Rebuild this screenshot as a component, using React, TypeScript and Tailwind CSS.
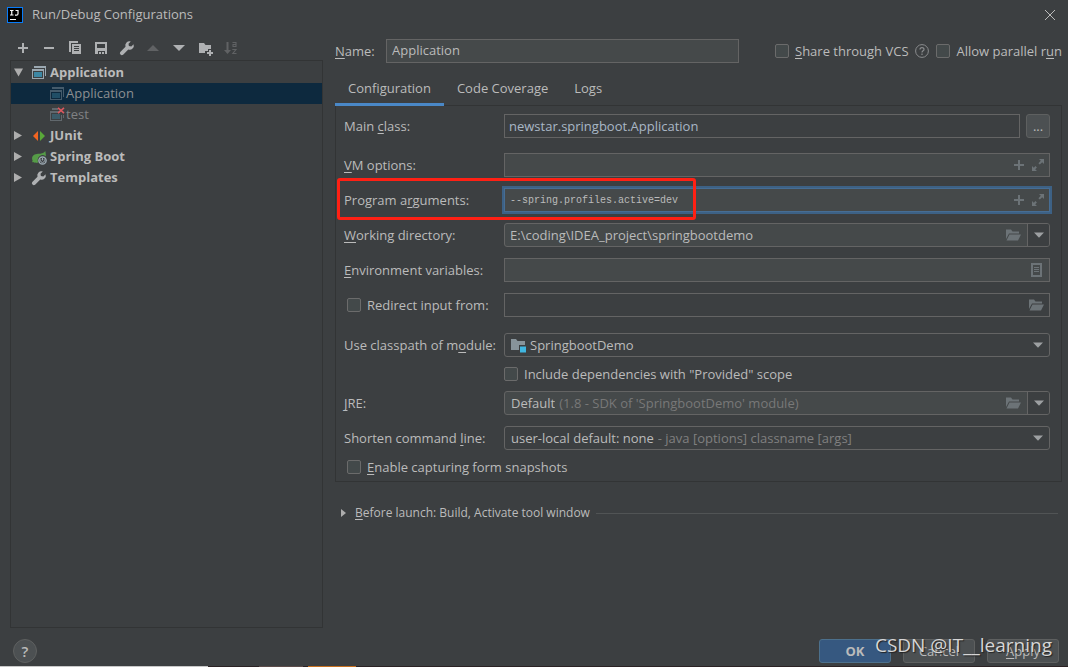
import React, { useState } from "react";

type IconProps = { className?: string };

function Svg({ children, className = "size-4" }: { children: React.ReactNode; className?: string }) {
  return (
    <svg viewBox="0 0 16 16" fill="currentColor" aria-hidden="true" className={`shrink-0 ${className}`}>
      {children}
    </svg>
  );
}

const PlusIcon = (p: IconProps) => (
  <Svg {...p}><path d="M7 3h2v4h4v2H9v4H7V9H3V7h4z" /></Svg>
);
const MinusIcon = () => <Svg><path d="M3 7h10v2H3z" /></Svg>;
const CopyIcon = () => (
  <Svg>
    <path d="M2 1h9v2H4v9H2z" />
    <path fillRule="evenodd" d="M5 4h9v10H5zM7 6v1h5V6zm0 2v1h5V8zm0 2v1h5v-1z" />
  </Svg>
);
const SaveIcon = () => (
  <Svg><path fillRule="evenodd" d="M2 2h12v12h-2v-3H5v3H2zm2 2v4h8V4zM6 12h2v2H6zm3 0h2v2H9z" /></Svg>
);
const WrenchIcon = (p: IconProps) => (
  <Svg {...p}>
    <path d="M14.600 4.200 12.300 6.500 9.900 6.100 9.500 3.700l2.300-2.300A4.200 4.200 0 0 0 6.500 6.700L1.300 11.900a2 2 0 0 0 2.800 2.800l5.200-5.200a4.200 4.200 0 0 0 5.300-5.300z" />
  </Svg>
);
const UpIcon = () => <Svg><path d="M2 11 8 5l6 6z" /></Svg>;
const DownIcon = () => <Svg><path d="M2 5h12l-6 6z" /></Svg>;
const FolderPlusIcon = () => (
  <Svg className="size-4 overflow-visible">
    <path d="M2 3h5l1.500 2H14v4h-3v2H8v2H2z" />
    <path d="M12 10h2v2h2v2h-2v2h-2v-2h-2v-2h2z" />
  </Svg>
);
const SortIcon = () => (
  <Svg>
    <path d="M3.500 2h2v8H8l-3.500 4L1 10h2.500z" />
    <path
      fill="none"
      stroke="currentColor"
      strokeWidth="1.100"
      d="M9.500 2.500h3.500v4.500M13 4.500h-3v2h3M9.300 9.500h3.700L9.800 13.500h3.700"
    />
  </Svg>
);
const AppIcon = (p: IconProps) => (
  <Svg {...p}>
    <path fill="#9aa7b0" d="M3 1h12v10h-1V3H3z" />
    <path fill="#9aa7b0" fillRule="evenodd" d="M1 4h12v10H1zm1 2v7h10V6z" />
    <path fill="#3d87a3" d="M3 7h8v5H3z" />
  </Svg>
);
const BrokenAppIcon = () => (
  <Svg>
    <g opacity=".4">
      <path fill="#9aa7b0" d="M3 1h6v2H3zM14 8h1v3h-1z" />
      <path fill="#9aa7b0" fillRule="evenodd" d="M1 4h9l1 2H2v7h10V8h1v6H1z" />
      <path fill="#3d87a3" d="M3 7h8v5H3z" />
    </g>
    <path fill="none" stroke="#db5860" strokeWidth="1.600" d="M9 .800l6 5.400M15 .800l-6 5.400" />
  </Svg>
);
const JUnitIcon = () => (
  <Svg>
    <path fill="#f26522" d="M7 3v10L2 8z" />
    <path fill="#59a839" d="M9 3v10l5-5z" />
  </Svg>
);
const SpringIcon = () => (
  <Svg>
    <path fill="#559b47" d="M14.300 2c.5 2.500.7 4 .4 5.400A4.800 4.800 0 0 0 7 12.600L6.500 14c-2 0-3.300-.3-4.300-.9L1 13.300l.6-1.500C-.2 7.500 3 5 7 4.800 10 4.700 12.800 4.500 14.300 2z" />
    <circle cx="11.500" cy="11.500" r="3.600" fill="#3c3f41" stroke="#9aa7b0" strokeWidth="1.500" />
    <path fill="none" stroke="#9aa7b0" strokeWidth="1" d="M11.500 9v2.500M10 10.200a2 2 0 1 0 3 0" />
  </Svg>
);
const ExpandIcon = () => (
  <Svg>
    <path d="M9 2h5v5l-1.800-1.800-2.400 2.400-1.400-1.400 2.400-2.400zM2 14V9l1.800 1.800 1.700-1.700 1.400 1.400-1.700 1.700L7 14z" />
  </Svg>
);
const OpenFolderIcon = () => (
  <Svg>
    <path d="M1 2.500h5l1.500 2H14V6.500H4L1 12z" />
    <path d="M4.500 7.500H16L13 13.500H1.500z" />
  </Svg>
);
const ListIcon = () => (
  <Svg>
    <path fillRule="evenodd" d="M3 1h11v14H3zm2 2v10h7V3z" />
    <path d="M6 5h5v1H6zm0 2h5v1H6zm0 2h5v1H6z" />
  </Svg>
);
const ModuleIcon = () => (
  <Svg>
    <path fill="#87939a" d="M1 2h5l1.500 2H15v4H9v5H1z" />
    <path fill="#40b6e0" d="M10 9.500h6v6h-6z" />
  </Svg>
);
const Caret = () => (
  <svg viewBox="0 0 10 6" aria-hidden="true" className="h-1.5 w-2.5 shrink-0 fill-[#9da0a2]">
    <path d="M0 .500h10L5 5.800z" />
  </svg>
);

const U = ({ children }: { children: React.ReactNode }) => (
  <span className="underline underline-offset-2">{children}</span>
);

function Check({ id, children }: { id: string; children: React.ReactNode }) {
  return (
    <span className="flex items-center gap-[6px] whitespace-nowrap">
      <input
        id={id}
        type="checkbox"
        className="size-3.5 shrink-0 appearance-none rounded-[2px] border border-[#6b6b6b] bg-[#43494a] checked:bg-[#4a88c7]"
      />
      <label htmlFor={id}>{children}</label>
    </span>
  );
}

function Row({ id, label, children, className = "" }: {
  id: string;
  label: React.ReactNode;
  children: React.ReactNode;
  className?: string;
}) {
  return (
    <div className={`relative flex h-6 items-center ${className}`}>
      <label htmlFor={id} className="w-40 shrink-0 whitespace-nowrap">{label}</label>
      {children}
    </div>
  );
}

const box = "flex h-6 min-w-0 flex-1 items-center border border-[#646464]";
const field = "h-full min-w-0 flex-1 bg-transparent px-1 outline-none";
const ghost = "flex size-[19px] shrink-0 items-center justify-center text-[#6c7377]";

function TextActions({ name }: { name: string }) {
  return (
    <>
      <button aria-label={`Insert macro in ${name}`} className={ghost}><PlusIcon /></button>
      <button aria-label={`Expand ${name}`} className={`${ghost} mr-0.5`}><ExpandIcon /></button>
    </>
  );
}

function DropButton({ label }: { label: string }) {
  return (
    <button aria-label={label} className="flex h-full w-[22px] shrink-0 items-center justify-center rounded-r-[2px] border-l border-[#646464] bg-[#3c3f41]">
      <Caret />
    </button>
  );
}

const tools = [
  { name: "Add", icon: <PlusIcon /> },
  { name: "Remove", icon: <MinusIcon /> },
  { name: "Copy", icon: <CopyIcon /> },
  { name: "Save", icon: <SaveIcon /> },
  { name: "Edit templates", icon: <WrenchIcon /> },
  { name: "Move up", icon: <UpIcon />, off: true },
  { name: "Move down", icon: <DownIcon /> },
  { name: "New folder", icon: <FolderPlusIcon /> },
  { name: "Sort", icon: <SortIcon />, off: true },
];

function TreeGroup({ label, icon, open }: { label: string; icon: React.ReactNode; open?: boolean }) {
  return (
    <button className="flex h-[21px] w-full items-center pl-[3px] text-left font-bold">
      <svg viewBox="0 0 9 9" aria-hidden="true" className="mr-2 size-[9px] shrink-0 fill-[#adadad]">
        <path d={open ? "M0 .500h9L4.500 8.500z" : "M0 0l8 4.500L0 9z"} />
      </svg>
      {icon}
      <span className="ml-[3px] pb-0.5">{label}</span>
    </button>
  );
}

function Sidebar() {
  return (
    <aside className="flex w-[313px] shrink-0 flex-col">
      <div className="flex h-[31px] gap-2.5 pt-[11px] pl-[5px]">
        {tools.map((t) => (
          <button key={t.name} aria-label={t.name} disabled={t.off} className={`size-4 ${t.off ? "text-[#606264]" : "text-[#afb1b3]"}`}>
            {t.icon}
          </button>
        ))}
      </div>
      <nav aria-label="Configurations" className="flex-1 border border-[#323435] pt-px">
        <TreeGroup label="Application" icon={<AppIcon />} open />
        <button className="flex h-[21px] w-full items-center bg-[#0d293e] pl-[38px] text-left text-[#8c8f91]">
          <AppIcon className="size-4 opacity-40" />
          <span className="ml-px pb-0.5">Application</span>
        </button>
        <button className="flex h-[21px] w-full items-center pl-[38px] text-left text-[#808284]">
          <BrokenAppIcon />
          <span className="ml-px pb-0.5">test</span>
        </button>
        <TreeGroup label="JUnit" icon={<JUnitIcon />} />
        <TreeGroup label="Spring Boot" icon={<SpringIcon />} />
        <TreeGroup label="Templates" icon={<WrenchIcon className="size-4 text-[#afb1b3]" />} />
      </nav>
    </aside>
  );
}

function ConfigurationForm() {
  const [args, setArgs] = useState("--spring.profiles.active=dev");
  return (
    <section className="border border-[#323435] pt-2 pr-[11px] pb-0.5 pl-2">
      <Row id="main" label={<>Main <U>c</U>lass:</>}>
        <div className={box}>
          <input id="main" defaultValue="newstar.springboot.Application" className={`${field} text-[#a9b7c6]`} />
        </div>
        <button aria-label="Browse main class" className="ml-1.5 h-6 w-6 shrink-0 rounded-[3px] border border-[#5e6060] bg-[#4c5052] leading-5">
          ...
        </button>
      </Row>
      <Row id="vm" label={<><U>V</U>M options:</>} className="mt-[15px]">
        <div className={`${box} bg-[#45494a]`}>
          <input id="vm" className={field} />
          <TextActions name="VM options" />
        </div>
      </Row>
      <Row id="args" label={<>Program a<U>r</U>guments:</>} className="mt-[11px]">
        <div className="flex h-6 min-w-0 flex-1 items-center border border-[#466d94] bg-[#45494a] ring-2 ring-[#3d6185]">
          <input
            id="args"
            value={args}
            onChange={(e) => setArgs(e.target.value)}
            className="h-full min-w-0 flex-1 bg-transparent px-[5px] font-['Liberation_Mono',monospace] text-[10px] outline-none"
          />
          <TextActions name="program arguments" />
        </div>
        <div className="pointer-events-none absolute -top-2.5 -left-[7px] h-[42px] w-[359px] rounded-[3px] border-3 border-[#ff2014]" />
      </Row>
      <Row id="dir" label={<><U>W</U>orking directory:</>} className="mt-[11px]">
        <div className={`${box} rounded-[3px] bg-[#45494a]`}>
          <input id="dir" defaultValue="E:\coding\IDEA_project\springbootdemo" className={`${field} px-[5px]`} />
          <button aria-label="Browse working directory" className={`${ghost} mr-[5px]`}><OpenFolderIcon /></button>
          <DropButton label="Recent directories" />
        </div>
      </Row>
      <Row id="env" label={<><U>E</U>nvironment variables:</>} className="mt-[11px]">
        <div className={`${box} bg-[#45494a]`}>
          <input id="env" className={field} />
          <button aria-label="Edit environment variables" className={`${ghost} mr-1`}><ListIcon /></button>
        </div>
      </Row>
      <div className="mt-[11px] flex h-6 items-center">
        <div className="w-40 shrink-0 pl-[3px]"><Check id="redirect">Redirect input from:</Check></div>
        <div className={box}>
          <input aria-label="Redirect input file" className={field} />
          <button aria-label="Browse input file" className={`${ghost} mr-1`}><OpenFolderIcon /></button>
        </div>
      </div>
      <Row id="module" label={<>Use classpath of m<U>o</U>dule:</>} className="mt-4">
        <div className={`${box} rounded-[3px] pr-1.5 pl-[5px]`}>
          <ModuleIcon />
          <select id="module" className="ml-1 h-full min-w-0 flex-1 appearance-none bg-transparent outline-none">
            <option>SpringbootDemo</option>
          </select>
          <Caret />
        </div>
      </Row>
      <div className="mt-[5px] flex h-6 items-center pl-40">
        <Check id="provided">Include dependencies with "Provided" scope</Check>
      </div>
      <Row id="jre" label={<><U>J</U>RE:</>} className="mt-[5px]">
        <div className={`${box} rounded-[3px] bg-[#45494a] pl-1.5`}>
          <select id="jre" className="field-sizing-content h-full appearance-none bg-transparent outline-none">
            <option>Default</option>
          </select>
          <span className="ml-1 flex-1 truncate text-[#787878]">(1.8 - SDK of 'SpringbootDemo' module)</span>
          <button aria-label="Browse JRE" className={`${ghost} mr-[5px]`}><OpenFolderIcon /></button>
          <DropButton label="Choose JRE" />
        </div>
      </Row>
      <Row id="shorten" label={<>Shorten command <U>l</U>ine:</>} className="mt-[11px]">
        <div className={`${box} rounded-[3px] pr-1.5 pl-1.5`}>
          <select id="shorten" className="field-sizing-content h-full appearance-none bg-transparent outline-none">
            <option>user-local default: none</option>
          </select>
          <span className="ml-1 flex-1 truncate text-[#808080]">- java [options] classname [args]</span>
          <Caret />
        </div>
      </Row>
      <div className="mt-[5px] flex h-6 items-center pl-[3px]">
        <Check id="snapshots"><U>E</U>nable capturing form snapshots</Check>
      </div>
    </section>
  );
}

const tabs = ["Configuration", "Code Coverage", "Logs"];

export default function App() {
  const [tab, setTab] = useState(tabs[0]);
  return (
    <div className="relative flex min-h-screen flex-col bg-[#3c3f41] font-['Open_Sans','Noto_Sans_CJK_SC',sans-serif] text-[13px] leading-[18px] text-[#bbbbbb]">
      <header className="flex h-[29px] items-center pr-3 pl-[7px]">
        <svg viewBox="0 0 16 16" aria-hidden="true" className="size-4">
          <path fill="#087cfa" d="M0 0h16v16H0z" />
          <path fill="#000" d="M1 1h14v14H1z" />
          <path fill="none" stroke="#fff" strokeWidth="1.200" d="M3 3.500h3.500M4.750 3.500v4.500M3 8h3.500M8.500 3.500h2.500v3.200q0 1.500-1.500 1.500H8M3 12.500h6" />
        </svg>
        <h1 className="ml-[9px] flex-1 pb-0.5">Run/Debug Configurations</h1>
        <button aria-label="Close">
          <svg viewBox="0 0 12 12" aria-hidden="true" className="size-3 fill-none stroke-[#bbbbbb]">
            <path d="M1 1l10 10M11 1L1 11" />
          </svg>
        </button>
      </header>

      <div className="flex flex-1 gap-3 pr-1.5 pl-2.5">
        <Sidebar />
        <main className="min-w-0 flex-1 pt-2.5">
          <div className="flex h-6 items-center">
            <label htmlFor="name" className="w-[51px] shrink-0"><U>N</U>ame:</label>
            <input id="name" defaultValue="Application" className="h-6 min-w-0 flex-1 border border-[#646464] bg-[#45494a] px-[5px] pb-0.5 outline-none" />
            <div className="ml-9 flex w-[287px] shrink-0 items-center justify-between">
              <Check id="vcs"><U>S</U>hare through VCS</Check>
              <svg viewBox="0 0 14 14" aria-hidden="true" className="size-3.5 fill-none stroke-[#8a8c8e]">
                <circle cx="7" cy="7" r="6.400" />
                <path strokeWidth="1.200" d="M5 5.600C5 3 9 3 9 5.400 9 6.800 7 6.900 7 8.500M7 9.500v1.400" />
              </svg>
              <Check id="parallel">Allow parallel r<U>u</U>n</Check>
            </div>
          </div>
          <div role="tablist" className="mt-2.5 -mb-px flex h-[33px]">
            {tabs.map((t) => (
              <button
                key={t}
                role="tab"
                aria-selected={t === tab}
                onClick={() => setTab(t)}
                className={`relative border-b-3 px-[13px] ${t === tab ? "border-[#4a88c7]" : "border-transparent"}`}
              >
                {t}
              </button>
            ))}
          </div>
          <ConfigurationForm />
          <button className="mt-[22px] flex w-full items-center pr-1 pl-1.5 text-left text-[12px]">
            <svg viewBox="0 0 5 8" aria-hidden="true" className="mr-[9px] h-2 w-[5px] shrink-0 fill-[#adadad]">
              <path d="M0 0l5 4-5 4z" />
            </svg>
            <span><U>B</U>efore launch: Build, Activate tool window</span>
            <span className="ml-1.5 h-px flex-1 bg-[#515455]" />
          </button>
        </main>
      </div>

      <footer className="flex h-[38px] items-center gap-3 pt-2 pr-[9px] pl-[13px]">
        <button aria-label="Help" className="mr-auto size-6 rounded-full border border-[#5e6060] bg-[#4c5052] text-[15px] leading-5 font-semibold">
          ?
        </button>
        <button className="h-6 w-[72px] rounded-[3px] border border-[#4c708c] bg-[#365880] font-bold">OK</button>
        <button className="h-6 w-[72px] rounded-[3px] border border-[#5e6060] bg-[#4c5052]">Cancel</button>
        <button className="h-6 w-[72px] rounded-[3px] border border-[#5e6060] bg-[#4c5052]"><U>A</U>pply</button>
      </footer>
      <div className="flex h-px bg-[#2b2224]">
        <span className="w-52 bg-[#c8c8c8]" />
        <span className="ml-[51px] w-11 bg-[#5c4c4a]" />
        <span className="ml-[5px] w-12 bg-[#c8701e]" />
      </div>
      <p className="pointer-events-none absolute right-4 bottom-2 text-[19px] leading-7 text-[#d6d6d6] [text-shadow:1px_1px_1px_#222]">
        CSDN @IT__learning
      </p>
    </div>
  );
}
